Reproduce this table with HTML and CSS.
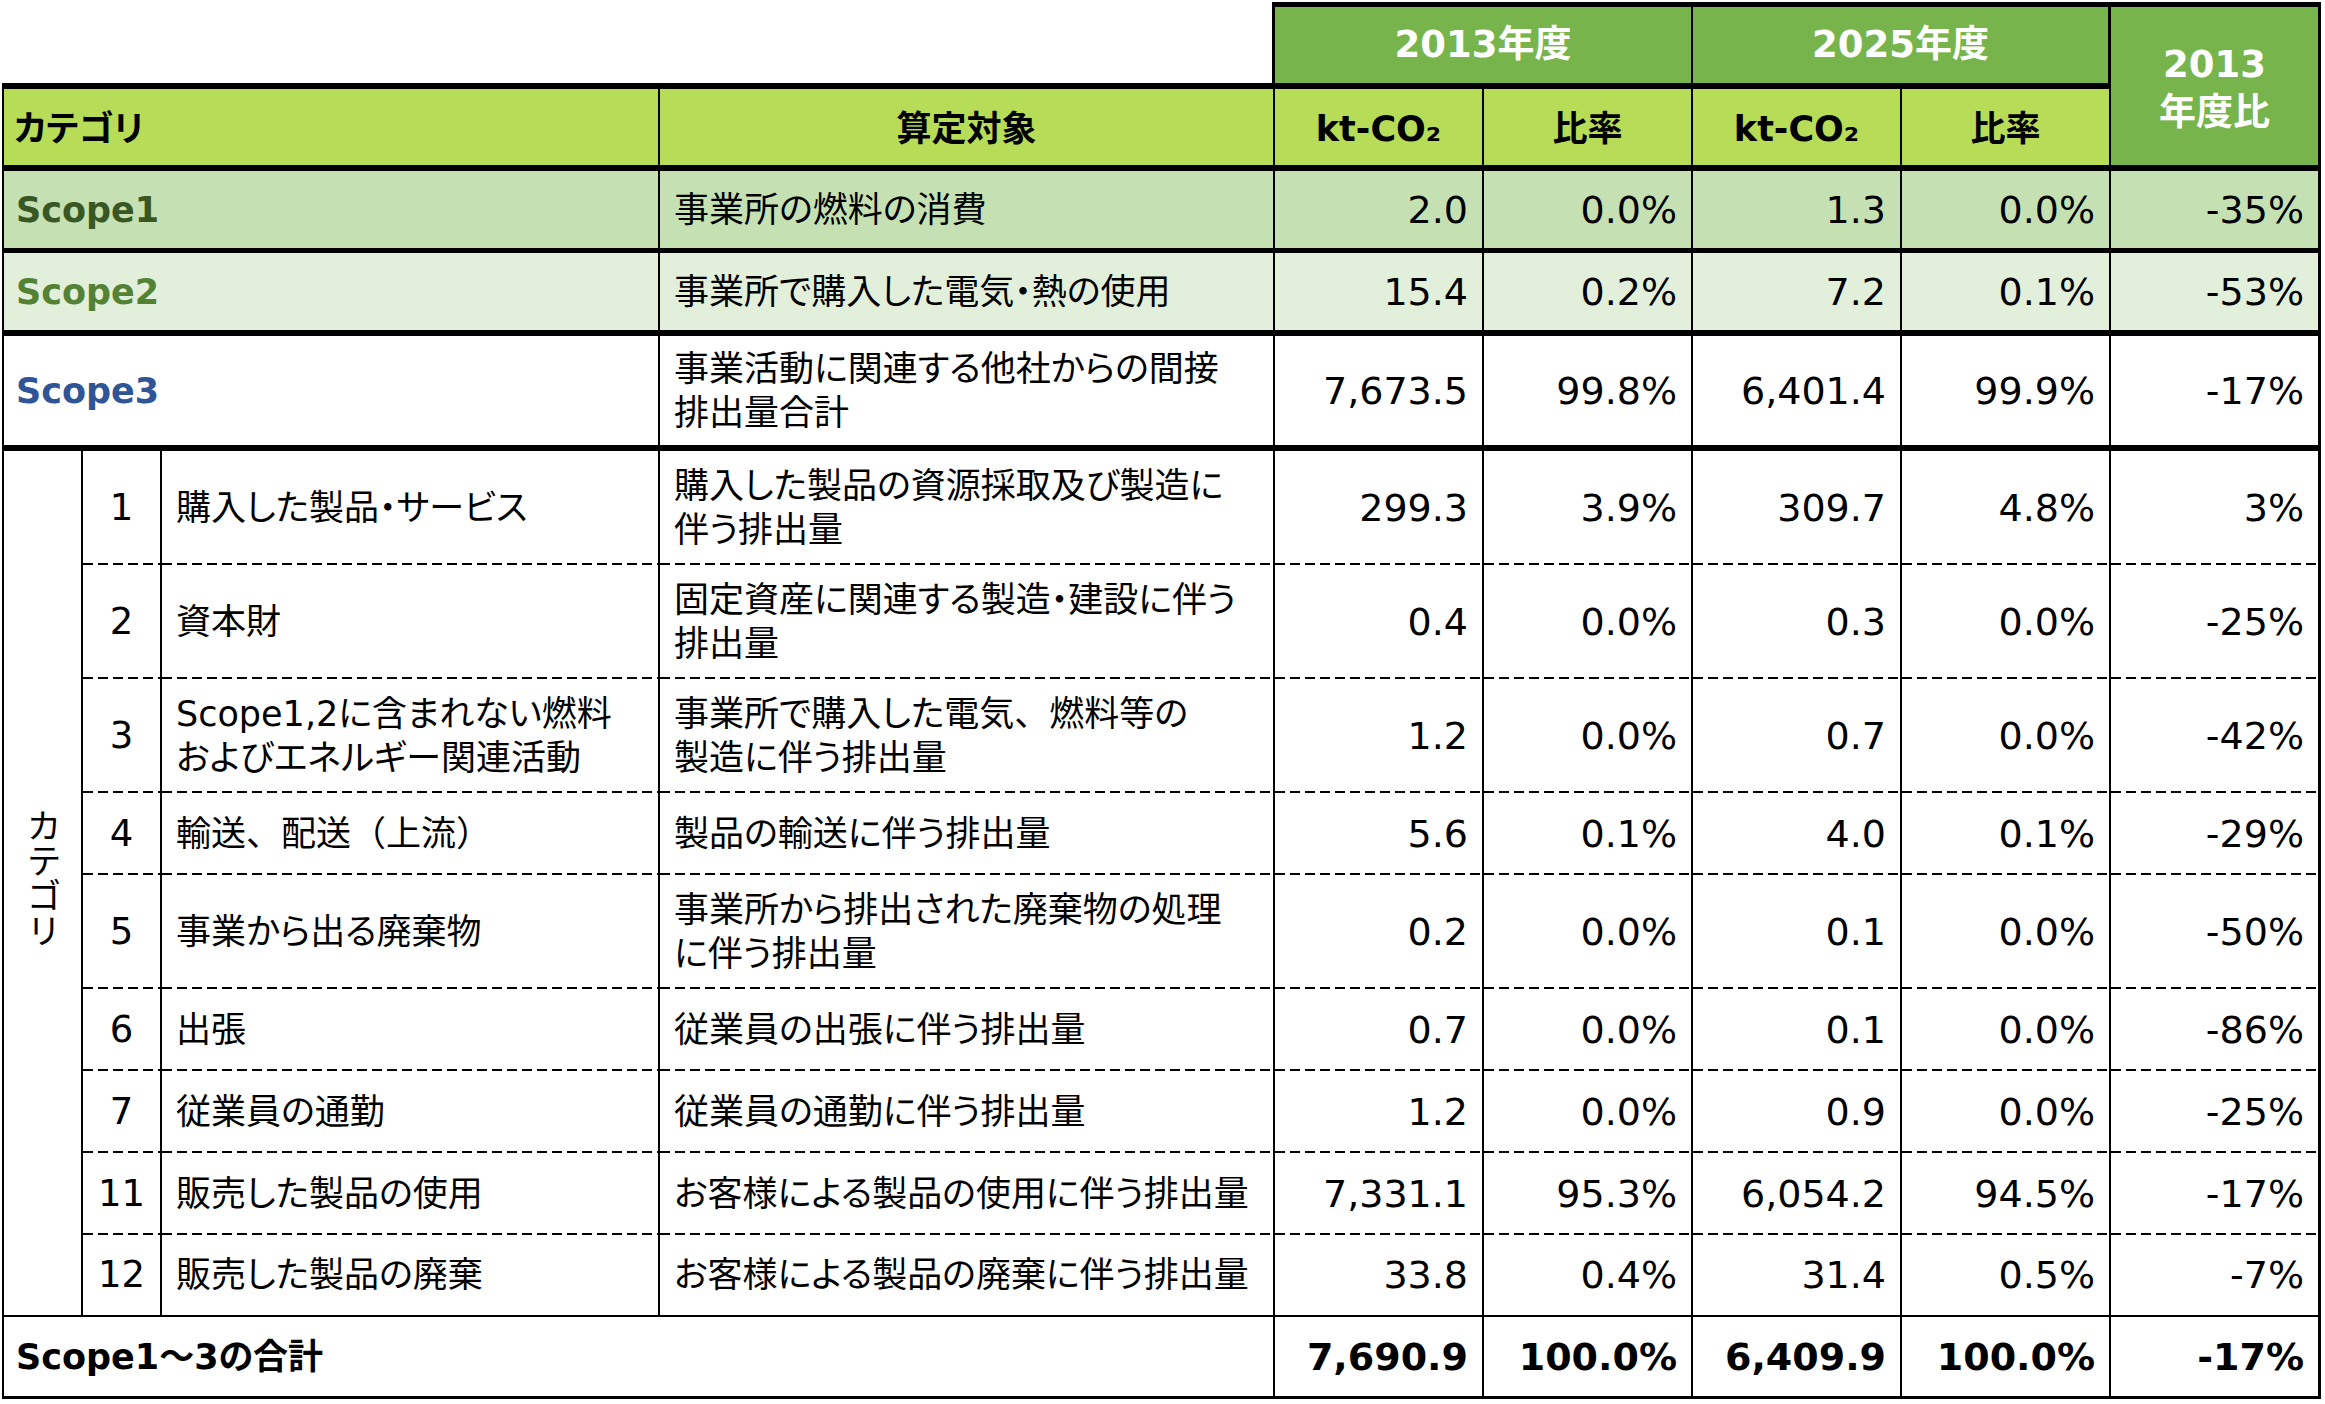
FILE: index.html
```html
<!DOCTYPE html>
<html lang="ja">
<head>
<meta charset="utf-8">
<title>GHG排出量</title>
<link rel="stylesheet" href="styles.css">
</head>
<body>
<table class="ghg">
  <colgroup>
    <col class="c-a"><col class="c-b"><col class="c-c"><col class="c-d">
    <col class="c-n"><col class="c-n"><col class="c-n"><col class="c-n"><col class="c-i">
  </colgroup>
  <thead>
    <tr class="h1">
      <th class="blank" colspan="4"></th>
      <th class="year" colspan="2">2013年度</th>
      <th class="year year-last" colspan="2">2025年度</th>
      <th class="cmp" rowspan="2">2013<br>年度比</th>
    </tr>
    <tr class="h2">
      <th class="sub first left" colspan="3">カテゴリ</th>
      <th class="sub">算定対象</th>
      <th class="sub">kt-CO₂</th>
      <th class="sub">比率</th>
      <th class="sub">kt-CO₂</th>
      <th class="sub">比率</th>
    </tr>
  </thead>
  <tbody>
    <tr class="s1 r-s1">
      <td class="first label" colspan="3">Scope1</td>
      <td>事業所の燃料の消費</td>
      <td class="num">2.0</td><td class="num">0.0%</td><td class="num">1.3</td><td class="num">0.0%</td><td class="num last">-35%</td>
    </tr>
    <tr class="s2 r-s2">
      <td class="first label" colspan="3">Scope2</td>
      <td>事業所で購入した電気・熱の使用</td>
      <td class="num">15.4</td><td class="num">0.2%</td><td class="num">7.2</td><td class="num">0.1%</td><td class="num last">-53%</td>
    </tr>
    <tr class="s3 r-s3">
      <td class="first label" colspan="3">Scope3</td>
      <td>事業活動に関連する他社からの間接<br>排出量合計</td>
      <td class="num">7,673.5</td><td class="num">99.8%</td><td class="num">6,401.4</td><td class="num">99.9%</td><td class="num last">-17%</td>
    </tr>
    <tr class="cat tall">
      <td class="first vcat" rowspan="9"><span class="vtext">カテゴリ</span></td>
      <td class="no dash">1</td><td class="dash">購入した製品・サービス</td>
      <td class="dash">購入した製品の資源採取及び製造に<br>伴う排出量</td>
      <td class="num dash">299.3</td><td class="num dash">3.9%</td><td class="num dash">309.7</td><td class="num dash">4.8%</td><td class="num last dash">3%</td>
    </tr>
    <tr class="cat tall">
      <td class="no dash">2</td><td class="dash">資本財</td>
      <td class="dash">固定資産に関連する製造・建設に伴う<br>排出量</td>
      <td class="num dash">0.4</td><td class="num dash">0.0%</td><td class="num dash">0.3</td><td class="num dash">0.0%</td><td class="num last dash">-25%</td>
    </tr>
    <tr class="cat tall">
      <td class="no dash">3</td><td class="dash">Scope1,2に含まれない燃料<br>およびエネルギー関連活動</td>
      <td class="dash">事業所で購入した電気<span class="fw">、</span>燃料等の<br>製造に伴う排出量</td>
      <td class="num dash">1.2</td><td class="num dash">0.0%</td><td class="num dash">0.7</td><td class="num dash">0.0%</td><td class="num last dash">-42%</td>
    </tr>
    <tr class="cat short">
      <td class="no dash">4</td><td class="dash">輸送<span class="fw">、</span>配送<span class="fw">（</span>上流<span class="fw">）</span></td>
      <td class="dash">製品の輸送に伴う排出量</td>
      <td class="num dash">5.6</td><td class="num dash">0.1%</td><td class="num dash">4.0</td><td class="num dash">0.1%</td><td class="num last dash">-29%</td>
    </tr>
    <tr class="cat tall">
      <td class="no dash">5</td><td class="dash">事業から出る廃棄物</td>
      <td class="dash">事業所から排出された廃棄物の処理<br>に伴う排出量</td>
      <td class="num dash">0.2</td><td class="num dash">0.0%</td><td class="num dash">0.1</td><td class="num dash">0.0%</td><td class="num last dash">-50%</td>
    </tr>
    <tr class="cat short">
      <td class="no dash">6</td><td class="dash">出張</td>
      <td class="dash">従業員の出張に伴う排出量</td>
      <td class="num dash">0.7</td><td class="num dash">0.0%</td><td class="num dash">0.1</td><td class="num dash">0.0%</td><td class="num last dash">-86%</td>
    </tr>
    <tr class="cat short">
      <td class="no dash">7</td><td class="dash">従業員の通勤</td>
      <td class="dash">従業員の通勤に伴う排出量</td>
      <td class="num dash">1.2</td><td class="num dash">0.0%</td><td class="num dash">0.9</td><td class="num dash">0.0%</td><td class="num last dash">-25%</td>
    </tr>
    <tr class="cat short">
      <td class="no dash">11</td><td class="dash">販売した製品の使用</td>
      <td class="dash">お客様による製品の使用に伴う排出量</td>
      <td class="num dash">7,331.1</td><td class="num dash">95.3%</td><td class="num dash">6,054.2</td><td class="num dash">94.5%</td><td class="num last dash">-17%</td>
    </tr>
    <tr class="cat short end">
      <td class="no">12</td><td>販売した製品の廃棄</td>
      <td>お客様による製品の廃棄に伴う排出量</td>
      <td class="num">33.8</td><td class="num">0.4%</td><td class="num">31.4</td><td class="num">0.5%</td><td class="num last">-7%</td>
    </tr>
    <tr class="total">
      <td class="first" colspan="4">Scope1～3の合計</td>
      <td class="num">7,690.9</td><td class="num">100.0%</td><td class="num">6,409.9</td><td class="num">100.0%</td><td class="num last">-17%</td>
    </tr>
  </tbody>
</table>
</body>
</html>
```

FILE: styles.css
```css
* { box-sizing: border-box; }

html, body {
  margin: 0;
  padding: 0;
  background: #ffffff;
}

body {
  padding: 2px 0 0 2px;
  font-family: "DejaVu Sans", "Noto Sans CJK JP", sans-serif;
  font-size: 35px;
  color: #000000;
  font-feature-settings: "palt";
}

.fw { font-feature-settings: normal; }

.ghg {
  border-collapse: separate;
  border-spacing: 0;
  table-layout: fixed;
  width: 2319px;
}

.c-a { width: 81px; }
.c-b { width: 79px; }
.c-c { width: 498px; }
.c-d { width: 615px; }
.c-n { width: 209px; }
.c-i { width: 210px; }

.ghg th,
.ghg td {
  padding: 0 14px;
  vertical-align: middle;
  text-align: left;
  white-space: nowrap;
  line-height: 44px;
  font-weight: normal;
  border-right: 2px solid #000000;
}

.ghg .first { border-left: 2px solid #000000; }
.ghg .last { border-right: 3px solid #000000; }

/* header row 1 */
.h1 { height: 87px; }

.ghg .blank {
  background: #ffffff;
  border-right: 3px solid #000000;
  border-bottom: 6px solid #000000;
}

.ghg .year {
  background: #77b54c;
  color: #ffffff;
  font-weight: bold;
  font-size: 37px;
  text-align: center;
  border-top: 5px solid #000000;
  border-bottom: 6px solid #000000;
}

.ghg .year-last { border-right: 3px solid #000000; }

.ghg .cmp {
  background: #77b54c;
  color: #ffffff;
  font-weight: bold;
  font-size: 37px;
  line-height: 48px;
  text-align: center;
  border-top: 5px solid #000000;
  border-right: 3px solid #000000;
  border-bottom: 6px solid #000000;
  padding-top: 6px;
}

/* header row 2 */
.h2 { height: 82px; }

.ghg .sub {
  background: #b7dc57;
  font-weight: bold;
  text-align: center;
  border-bottom: 6px solid #000000;
  padding-top: 4px;
}

.ghg .sub.left {
  text-align: left;
  padding-left: 10px;
}

/* scope rows */
.r-s1 { height: 82px; }
.r-s2 { height: 83px; }
.r-s3 { height: 115px; }

.s1 td { background: #c5e0b3; border-bottom: 5px solid #000000; }
.s2 td { background: #e2efda; border-bottom: 6px solid #000000; }
.s3 td { background: #ffffff; border-bottom: 6px solid #000000; }

.ghg .label { font-weight: bold; padding-left: 12px; }
.s1 .label { color: #385723; }
.s2 .label { color: #548235; }
.s3 .label { color: #2f5597; }

/* numbers */
.ghg .num {
  text-align: right;
  font-size: 38px;
}

/* category rows */
.cat.tall { height: 114px; }
.cat.short { height: 82px; }

.ghg .dash {
  background: repeating-linear-gradient(90deg, #000000 0 10px, transparent 10px 15px) left bottom / 100% 2px no-repeat;
}

.end td { border-bottom: 2px solid #000000; }

.ghg .vcat {
  text-align: center;
  padding: 0 4px 0 0;
  border-bottom: 2px solid #000000;
}

.vtext {
  display: inline-block;
  writing-mode: vertical-rl;
  line-height: 40px;
  font-size: 35px;
}

.ghg .no {
  text-align: center;
  padding: 0;
  font-size: 37px;
}

/* total */
.total { height: 82px; }

.total td {
  font-weight: bold;
  border-bottom: 3px solid #000000;
}

.total .first { padding-left: 12px; }
```
